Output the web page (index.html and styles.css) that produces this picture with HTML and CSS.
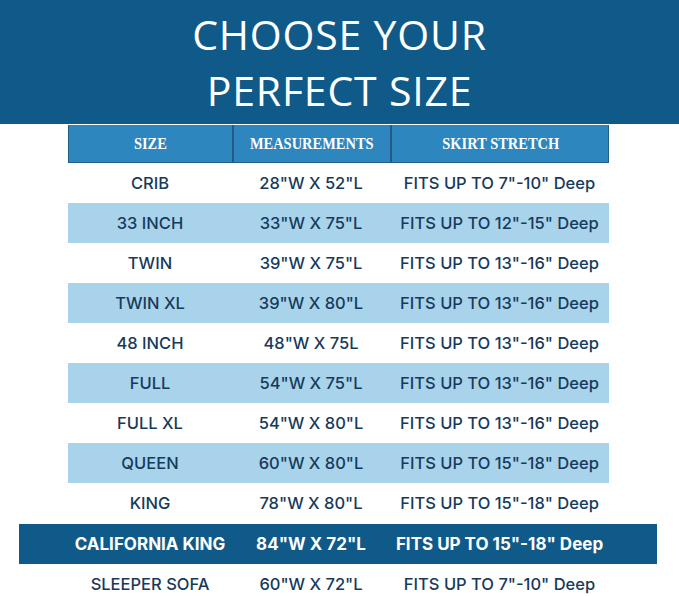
FILE: index.html
```html
<!DOCTYPE html>
<html>
<head>
<meta charset="utf-8">
<link rel="stylesheet" href="styles.css">
</head>
<body>
<header class="banner">
  <h1 class="title"><span>CHOOSE YOUR</span><span>PERFECT SIZE</span></h1>
</header>
<main class="chart">
  <div class="row head">
    <div class="cell"><span class="label">SIZE</span></div>
    <div class="cell"><span class="label">MEASUREMENTS</span></div>
    <div class="cell"><span class="label">SKIRT STRETCH</span></div>
  </div>
  <div class="row">
    <div class="cell">CRIB</div><div class="cell">28"W X 52"L</div><div class="cell">FITS UP TO 7"-10" Deep</div>
  </div>
  <div class="row alt">
    <div class="cell">33 INCH</div><div class="cell">33"W X 75"L</div><div class="cell">FITS UP TO 12"-15" Deep</div>
  </div>
  <div class="row">
    <div class="cell">TWIN</div><div class="cell">39"W X 75"L</div><div class="cell">FITS UP TO 13"-16" Deep</div>
  </div>
  <div class="row alt">
    <div class="cell">TWIN XL</div><div class="cell">39"W X 80"L</div><div class="cell">FITS UP TO 13"-16" Deep</div>
  </div>
  <div class="row">
    <div class="cell">48 INCH</div><div class="cell">48"W X 75L</div><div class="cell">FITS UP TO 13"-16" Deep</div>
  </div>
  <div class="row alt">
    <div class="cell">FULL</div><div class="cell">54"W X 75"L</div><div class="cell">FITS UP TO 13"-16" Deep</div>
  </div>
  <div class="row">
    <div class="cell">FULL XL</div><div class="cell">54"W X 80"L</div><div class="cell">FITS UP TO 13"-16" Deep</div>
  </div>
  <div class="row alt">
    <div class="cell">QUEEN</div><div class="cell">60"W X 80"L</div><div class="cell">FITS UP TO 15"-18" Deep</div>
  </div>
  <div class="row">
    <div class="cell">KING</div><div class="cell">78"W X 80"L</div><div class="cell">FITS UP TO 15"-18" Deep</div>
  </div>
  <div class="row featured">
    <div class="cell">CALIFORNIA KING</div><div class="cell">84"W X 72"L</div><div class="cell">FITS UP TO 15"-18" Deep</div>
  </div>
  <div class="row">
    <div class="cell">SLEEPER SOFA</div><div class="cell">60"W X 72"L</div><div class="cell">FITS UP TO 7"-10" Deep</div>
  </div>
</main>
</body>
</html>
```

FILE: styles.css
```css
html, body {
  margin: 0;
  padding: 0;
  background: #ffffff;
}
body {
  width: 679px;
  height: 596px;
  overflow: hidden;
  font-family: "Open Sans", "Liberation Sans", sans-serif;
}
.banner {
  background: #0f5a89;
  height: 124px;
  display: flex;
  justify-content: center;
}
.title {
  margin: 0;
  padding-top: 6px;
  display: flex;
  flex-direction: column;
  align-items: center;
  color: #ffffff;
  font-weight: 400;
  font-size: 41px;
  line-height: 56px;
  letter-spacing: 0.8px;
}
.chart {
  width: 541px;
  margin: 1px 0 0 68px;
}
.row {
  display: grid;
  grid-template-columns: 164px 158px 219px;
  height: 40px;
  align-items: center;
  color: #163a5c;
  font-family: "Inter", "Open Sans", sans-serif;
  font-weight: 500;
  font-size: 16.5px;
}
.cell {
  text-align: center;
  white-space: nowrap;
}
.row.alt {
  background: #a8d3ea;
}
.row.head {
  height: 38px;
  background: #2e86bf;
  color: #ffffff;
  font-family: "Liberation Serif", serif;
  font-weight: 700;
  font-size: 17px;
  box-shadow: inset 1px 0 0 #255f88, inset -1px 0 0 #255f88, inset 0 -1px 0 #255f88;
}
.row.head .cell {
  height: 100%;
  display: flex;
  align-items: center;
  justify-content: center;
}
.row.head .label {
  display: inline-block;
  transform: scaleX(0.85);
}
.row.head .cell + .cell {
  border-left: 2px solid #245a80;
}
.row.featured {
  background: #0f5a89;
  color: #ffffff;
  font-weight: 700;
  font-size: 17px;
  margin: 1px -48px 0 -49px;
  padding: 0 48px 0 49px;
}
```
